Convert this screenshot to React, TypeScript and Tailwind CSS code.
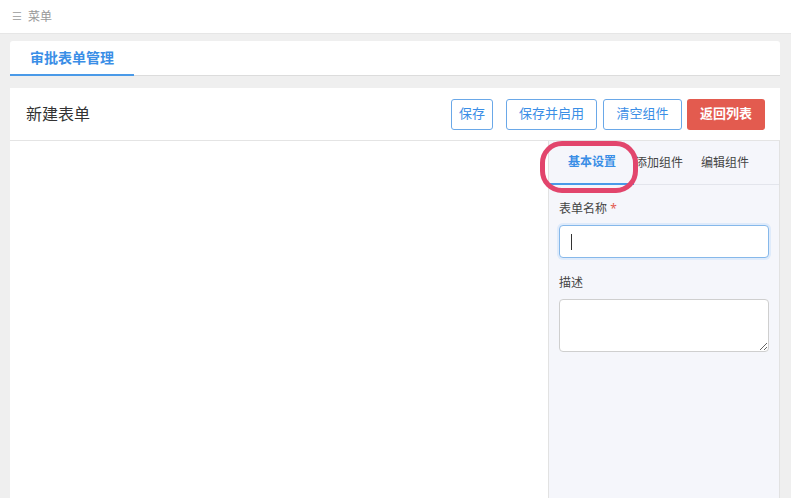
import { useState } from "react";

const tabs = ["基本设置", "添加组件", "编辑组件"];

const App = () => {
  const [active] = useState(0);

  return (
    <div className="h-[498px] w-full overflow-hidden bg-[#efefef] flex flex-col font-['Noto_Sans','Noto_Sans_CJK_SC',sans-serif] text-[#333]">
      <div className="h-[34px] shrink-0 bg-white flex items-center px-3 text-xs text-[#999] border-b border-[#e6e6e6]">
        <span className="mr-[6px] text-[11px] text-[#aaa]">☰</span>
        菜单
      </div>

      <div className="flex-1 flex flex-col px-[10px] pt-[7px] pr-[11px]">
        <div className="h-[35px] shrink-0 bg-white rounded-t-[3px] border-b border-[#dcdcdc] flex items-end">
          <div className="w-[124px] h-full flex items-center justify-center text-sm font-semibold text-[#3a8ee6] border-b-2 border-[#4a9ae8] -mb-px">
            审批表单管理
          </div>
        </div>

        <div className="mt-3 flex-1 bg-white flex flex-col">
          <div className="h-[53px] shrink-0 flex items-center justify-between pl-4 pr-[15px] border-b border-[#e4e4e4]">
            <div className="text-base text-[#333]">新建表单</div>
            <div className="flex items-center">
              <button className="h-[31px] w-[42px] rounded-[3px] border border-[#6aa8e8] text-[13px] text-[#3a8ee6] bg-white">
                保存
              </button>
              <button className="ml-[13px] h-[31px] w-[91px] rounded-[3px] border border-[#6aa8e8] text-[13px] text-[#3a8ee6] bg-white">
                保存并启用
              </button>
              <button className="ml-[6px] h-[31px] w-[79px] rounded-[3px] border border-[#6aa8e8] text-[13px] text-[#3a8ee6] bg-white">
                清空组件
              </button>
              <button className="ml-[5px] h-[31px] w-[78px] rounded-[3px] bg-[#e35b4f] text-[13px] font-semibold text-white">
                返回列表
              </button>
            </div>
          </div>

          <div className="flex-1 flex">
            <div className="flex-1" />
            <div className="relative w-[232px] bg-[#f5f6fb] border-l border-r border-[#e2e2e2] flex flex-col">
              <div className="h-[44px] shrink-0 flex items-stretch border-b border-[#e3e5ec]">
                {tabs.map((t, i) => (
                  <div
                    key={t}
                    className={
                      i === active
                        ? "ml-px w-[84px] flex items-center justify-center text-xs font-semibold text-[#3a8ee6] border-b-2 border-[#4a9ae8] -mb-px"
                        : i === 1
                          ? "w-[50px] flex items-center justify-center text-xs text-[#444]"
                          : "ml-4 w-[50px] flex items-center justify-center text-xs text-[#444]"
                    }
                  >
                    {t}
                  </div>
                ))}
              </div>

              <div className="px-[10px] pt-[16px] flex flex-col">
                <label className="text-xs leading-4 text-[#444]">
                  表单名称 <span className="text-[#e35b4f]">*</span>
                </label>
                <div className="relative mt-[8px]">
                  <input className="w-full h-[33px] rounded-[4px] border border-[#86b8ea] bg-white shadow-[0_0_0_2px_rgba(64,158,255,0.12)] outline-none px-3 text-sm" />
                  <span className="absolute left-[12px] top-[9px] h-[16px] w-px bg-[#333]" />
                </div>
                <label className="mt-[17px] text-xs leading-4 text-[#444]">描述</label>
                <textarea className="mt-[8px] w-full h-[53px] rounded-[4px] border border-[#cfcfcf] bg-white outline-none px-3 py-1 text-sm" />
              </div>

              {/* annotation ring over the first tab */}
              <div className="absolute left-[-9px] top-0 w-[98px] h-[52px] rounded-[22px] border-[5px] border-[#e2456c] pointer-events-none" />
            </div>
          </div>
        </div>
      </div>
    </div>
  );
};

export default App;
